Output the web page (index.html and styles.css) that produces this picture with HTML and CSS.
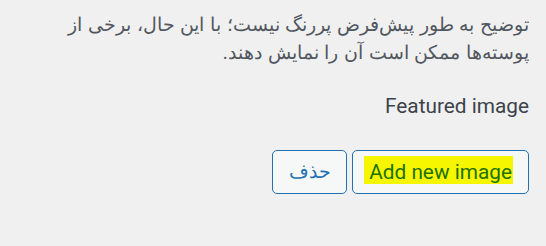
FILE: index.html
```html
<!DOCTYPE html>
<html lang="fa" dir="rtl">
<head>
<meta charset="utf-8">
<link rel="stylesheet" href="styles.css">
</head>
<body>
<div class="panel">
  <p class="description">توضیح به طور پیش‌فرض پررنگ نیست؛ با این حال، برخی از پوسته‌ها ممکن است آن را نمایش دهند.</p>
  <p class="label" dir="ltr">Featured image</p>
  <div class="actions">
    <button class="btn" type="button"><span class="mark">Add new image</span></button>
    <button class="btn btn-delete" type="button">حذف</button>
  </div>
</div>
</body>
</html>
```
FILE: styles.css
```css
html, body {
  margin: 0;
  padding: 0;
  background: #f0f0f1;
}
body {
  font-family: Roboto, sans-serif;
  width: 546px;
  height: 246px;
  overflow: hidden;
}
.panel {
  direction: rtl;
  padding: 11px 17px 0 17px;
}
.description {
  margin: 0;
  font-size: 19.3px;
  line-height: 28px;
  word-spacing: 0.9px;
  color: #50575e;
  text-align: right;
}
.label {
  margin: 24px 0 0 0;
  font-size: 20.8px;
  line-height: 31px;
  color: #3c434a;
  text-align: right;
}
.actions {
  display: flex;
  flex-direction: row;
  gap: 5px;
  margin-top: 28px;
}
.btn {
  font-family: Roboto, sans-serif;
  font-size: 20.8px;
  line-height: 42px;
  height: 44px;
  padding: 0 16px;
  border: 1px solid #2271b1;
  border-radius: 5px;
  background: #f6f7f7;
  color: #2271b1;
  cursor: pointer;
  white-space: nowrap;
}
.btn-delete {
  font-size: 19px;
  padding: 0 15px 0 16px;
}
.mark {
  background: #f5f600;
  color: #227100;
  padding: 4px 1px 0 5px;
  margin: 0 -1px 0 -5px;
}
```
